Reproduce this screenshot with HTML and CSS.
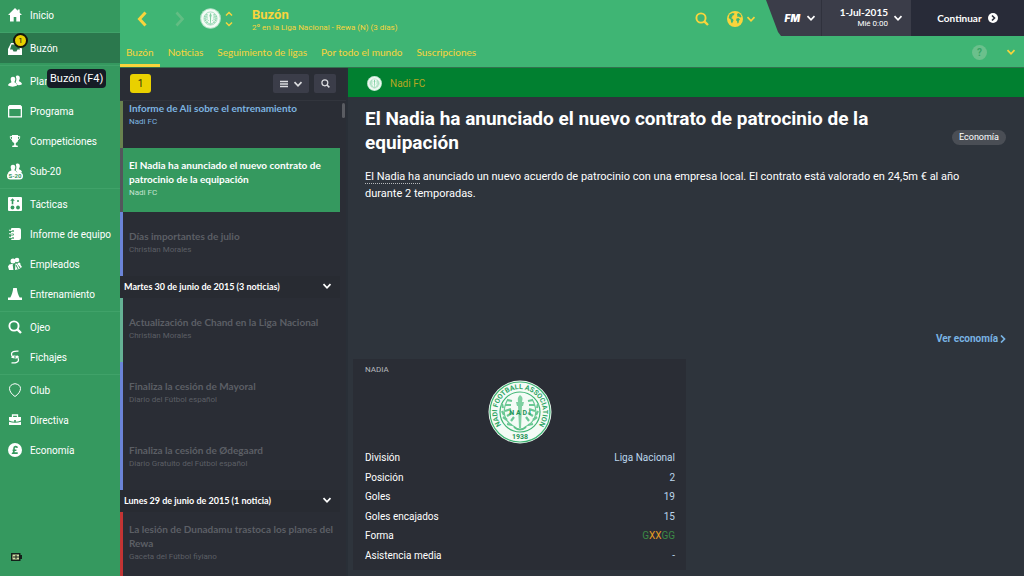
FILE: index.html
```
<!DOCTYPE html>
<html lang="es">
<head>
    <meta charset="UTF-8">
    <meta name="viewport" content="width=device-width, initial-scale=1">
    <title>Buzón</title>
    <link rel="stylesheet" href="styles.css">
</head>
<body>
    <!-- Símbolos reutilizados -->
    <svg class="symbols" aria-hidden="true">
        <symbol id="down" viewBox="0 0 10 10"><path d="M1.5 3.2L5 6.8L8.5 3.2" fill="none" stroke="currentColor" stroke-width="1.7"/></symbol>
        <symbol id="search" viewBox="0 0 14 14"><circle cx="6" cy="6" r="4.6" fill="none" stroke="currentColor" stroke-width="1.9"/><path d="M9.3 9.3L13 13" stroke="currentColor" stroke-width="2.4"/></symbol>
        <symbol id="people" viewBox="0 0 14 14"><path d="M9.500 1.500c1.700 0 2.500 1.200 2.300 2.900c-.1 1.200-.9 1.900-.9 2.600c.4.900 3.100 1 3.100 3.200c-1.500.9-3 1.100-4.600.9C8.900 9.600 7.900 8.800 7.500 8.300c.9-1.300 1.300-3.300.3-5.500c.3-.8.9-1.300 1.700-1.300z" fill="currentColor"/><path d="M5 2.800c1.700 0 2.500 1.200 2.300 2.800c-.1 1.200-.8 1.800-.8 2.600c.5.900 2.800 1 2.600 3.300c-2.500 1.500-6.500 1.500-9 0c-.1-2.300 2.800-2.400 3.300-3.300c0-.8-.6-1.400-.7-2.600C2.500 4 3.300 2.800 5 2.800z" fill="currentColor"/></symbol>
        <symbol id="crest" viewBox="0 0 64 64">
            <circle cx="32" cy="32" r="31.500" fill="#f4fbf6"/>
            <circle cx="32" cy="32" r="30" fill="none" stroke="#3fb574" stroke-width="1.200"/>
            <circle cx="32" cy="32" r="20" fill="none" stroke="#3fb574" stroke-width="1.200"/>
            <g fill="none" stroke="#6ac894" stroke-width="1.200">
                <path d="M27 47C16 42 13 31 20 19M37 47C48 42 51 31 44 19"/>
                <path stroke-width="2.200" d="M19 20l5 1M17 25l6 0M15 28l-1-4M17 31l6-2M16 35l-2-4M19 36l5-3M19 40l-4-3M23 41l3-4M24 45l-5-1M45 20l-5 1M47 25l-6 0M49 28l1-4M47 31l-6-2M48 35l2-4M45 36l-5-3M45 40l4-3M41 41l-3-4M40 45l5-1"/>
            </g>
            <path d="M32 15c4 3 2 5 2 7h2l-1 4h-1l-1 22h-2l-1-22h-1l-1-4h2c0-3-1-4 2-7z" fill="#7fd0a2"/>
            <path d="M26 47q6 5 12 0" fill="none" stroke="#5cc289" stroke-width="2"/>
        </symbol>
    </svg>

    <div class="app">
        <nav class="sidebar">
            <div class="group">
                <a href="#" class="nav-item"><svg viewBox="0 0 14 14"><path d="M7 0L0 7h2v6.500h3.700V9h2.600v4.500H12V7h2l-2.300-2.300V1.500H9.800v1.300z" fill="currentColor"/></svg>Inicio</a>
            </div>
            <div class="group">
                <a href="#" class="nav-item active"><svg viewBox="0 0 14 14"><path d="M3 2h8l3 6v6H0V8zM3.500 3.500L2 8.500h2.500l1 2h3l1-2H12l-1.500-5z" fill="currentColor" fill-rule="evenodd"/></svg>Buzón<span class="badge">1</span></a>
            </div>
            <div class="group">
                <a href="#" class="nav-item"><svg><use href="#people"/></svg>Plantilla<span class="tooltip">Buzón (F4)</span></a>
                <a href="#" class="nav-item"><svg viewBox="0 0 14 14"><path d="M1.500 1h11L14 2.500v11H0v-11zM1.300 5v7.200h11.400V5z" fill="currentColor" fill-rule="evenodd"/></svg>Programa</a>
                <a href="#" class="nav-item"><svg viewBox="0 0 14 14"><path d="M4 1h6v5c0 1.800-1 2.500-2.200 2.900v2.300l2 .6V13H4.200v-1.200l2-.6V8.900C5 8.500 4 7.800 4 6z" fill="currentColor"/><path d="M4.500 2.400H2.300c0 2 .7 3.400 2.500 3.800M9.500 2.400h2.200c0 2-.7 3.400-2.500 3.800" fill="none" stroke="currentColor" stroke-width="1"/></svg>Competiciones</a>
                <a href="#" class="nav-item"><svg class="youth" viewBox="0 0 18 18"><use href="#people" x="2" y="0" width="14" height="14"/><rect x="1" y="10.500" width="16" height="7" rx="3.500" fill="#fff"/><text x="9" y="16" text-anchor="middle">S-20</text></svg>Sub-20</a>
            </div>
            <div class="group">
                <a href="#" class="nav-item"><svg viewBox="0 0 14 14"><rect width="14" height="14" rx="1" fill="currentColor"/><g fill="#35995f"><circle cx="4.500" cy="10.500" r="1.900"/><circle cx="10" cy="10.500" r="1.900"/><circle cx="10" cy="4" r="1"/><path d="M4.500 1.200l2.300 2.600H5.300v3.500H3.700V3.800H2.200z"/></g></svg>Tácticas</a>
                <a href="#" class="nav-item"><svg viewBox="0 0 14 14"><path d="M4 1h7q2 0 2 2v8q0 2-2 2H4q-1 0-1-1V2q0-1 1-1z" fill="currentColor"/><path d="M1 4h4M1 7.500h4M1 11h4" stroke="#35995f" stroke-width="1.800" stroke-linecap="round"/><path d="M1 3.300q3-.5 3.500 1M1 6.800q3-.5 3.500 1M1 10.300q3-.5 3.500 1" fill="none" stroke="currentColor" stroke-width="1.100"/></svg>Informe de equipo</a>
                <a href="#" class="nav-item"><svg viewBox="0 0 14 14"><circle cx="5" cy="4" r="2.500" fill="currentColor"/><circle cx="9" cy="3" r="2.300" fill="currentColor"/><path d="M0 9.500Q1 6.500 5 7.200L6 13H1zM7 13l.5-6.500h4L14 10l-3 2z" fill="currentColor"/><path d="M5.200 8l.8 5M9 6l3 5M8 8l2 4" stroke="#35995f"/><circle cx="11" cy="7" r="1.500" fill="currentColor"/></svg>Empleados</a>
                <a href="#" class="nav-item"><svg viewBox="0 0 14 14"><path d="M5.200 1h3.600c.4 4 1.400 7 2.900 9.600H14V13H0v-2.400h2.300C3.800 8 4.800 5 5.200 1z" fill="currentColor"/></svg>Entrenamiento</a>
            </div>
            <div class="group">
                <a href="#" class="nav-item"><svg><use href="#search"/></svg>Ojeo</a>
                <a href="#" class="nav-item"><svg viewBox="0 0 14 14"><path d="M10.500 1.200C6 .8 3.500 2 3.500 4s.8 2.500 1.800 3.500M3.500 12.800c4.500.4 7-.8 7-2.800s-.5-3-1.600-4.200" fill="none" stroke="currentColor" stroke-width="1.300"/><path d="M3 7.800l3.600.6L6.400 4.800zM11 6.200L7.400 5.600l.2 3.600z" fill="currentColor"/></svg>Fichajes</a>
            </div>
            <div class="group">
                <a href="#" class="nav-item"><svg viewBox="0 0 14 14"><path d="M7 13.500C4 11.500 1.500 8.500 1.500 5.500c0-2.500 2-4.300 5.500-4.800c3.500.5 5.500 2.300 5.500 4.800c0 3-2.500 6-5.500 8z" fill="none" stroke="currentColor"/></svg>Club</a>
                <a href="#" class="nav-item"><svg viewBox="0 0 14 14"><path d="M4.500 4V2h5v2" fill="none" stroke="currentColor" stroke-width="1.300"/><path d="M1 4h12v3.500Q7 10 1 7.500zM1 8.700Q7 11 13 8.700V12H1z" fill="currentColor"/><rect x="6.200" y="7" width="1.600" height="2" fill="#35995f"/></svg>Directiva</a>
                <a href="#" class="nav-item"><svg viewBox="0 0 14 14"><circle cx="7" cy="7" r="7" fill="currentColor"/><path d="M9.400 4.800C8.800 3 6 3.300 6 5.200c0 1.600.6 3-.9 4.900h4.600M4.600 7.300h3.800" fill="none" stroke="#35995f" stroke-width="1.600"/></svg>Economía</a>
            </div>
            <svg class="battery" viewBox="0 0 11 8"><path d="M0 0h9.500v2H11v4H9.500v2H0z" fill="#14201a"/><rect x="1.500" y="1.500" width="6.500" height="5" fill="#d5dfa6"/><path d="M2 4h3M5 2v4M5 4h3" stroke="#14201a"/></svg>
        </nav>

        <div class="main">
            <header class="topbar">
                <div class="topbar-row">
                    <div class="history">
                        <button aria-label="Atrás"><svg viewBox="0 0 10 16"><path d="M8.500 1.500L2.500 8l6 6.500" fill="none" stroke="currentColor" stroke-width="3"/></svg></button>
                        <button aria-label="Adelante" disabled><svg viewBox="0 0 10 16"><path d="M1.500 1.500l6 6.500-6 6.500" fill="none" stroke="currentColor" stroke-width="2.600"/></svg></button>
                    </div>
                    <svg class="crest-top"><use href="#crest"/></svg>
                    <button class="switcher" aria-label="Cambiar"><svg viewBox="0 0 8 16"><path d="M1 4.500L4 1.500l3 3M1 11.500l3 3 3-3" fill="none" stroke="currentColor" stroke-width="1.500"/></svg></button>
                    <div class="page-title">
                        <h1>Buzón</h1>
                        <p>2º en la Liga Nacional - Rewa (N) (3 días)</p>
                    </div>
                    <button class="top-search" aria-label="Buscar"><svg><use href="#search"/></svg></button>
                    <button class="world" aria-label="Mundo"><svg class="globe" viewBox="0 0 16 16"><circle cx="8" cy="8" r="8" fill="currentColor"/><path d="M2.500 3.500l3-1.500 2 .5-.5 1.500-2 1 .5 1-1.500 1 2 1 .5 1.500-1.500 3-1-1.500-.3-2.500-2-1.500zM10 3l1.500-1 2 1.500 1 2.500-1.500.5-1-1-1.500.5zM9.500 7.500l2-.5 1.500 1.500-1 1-.5 2.500-1 .5-.5-2.500-1-.5z" fill="#3fb574"/></svg><svg class="chev"><use href="#down"/></svg></button>
                    <div class="game-controls">
                        <button class="fm"><b>FM</b><svg class="chev"><use href="#down"/></svg></button>
                        <button class="date"><span><b>1-Jul-2015</b><small>Mié 0:00</small></span><svg class="chev"><use href="#down"/></svg></button>
                        <button class="continue">Continuar<svg viewBox="0 0 10 10"><circle cx="5" cy="5" r="5" fill="#fff"/><path d="M4 2.500L6.500 5 4 7.500" fill="none" stroke="#282b38" stroke-width="1.600"/></svg></button>
                    </div>
                </div>
                <div class="tabs">
                    <a href="#" class="tab current">Buzón</a>
                    <a href="#" class="tab">Noticias</a>
                    <a href="#" class="tab">Seguimiento de ligas</a>
                    <a href="#" class="tab">Por todo el mundo</a>
                    <a href="#" class="tab">Suscripciones</a>
                    <button class="help">?</button>
                    <button class="more" aria-label="Más"><svg class="chev"><use href="#down"/></svg></button>
                </div>
            </header>

            <div class="content">
                <section class="inbox">
                    <div class="inbox-tools">
                        <span class="unread">1</span>
                        <button class="tool filter" aria-label="Filtrar"><svg viewBox="0 0 8 8"><path d="M0 1.500h8M0 4h8M0 6.500h8" stroke="currentColor" stroke-width="1.400"/></svg><svg class="chev"><use href="#down"/></svg></button>
                        <button class="tool" aria-label="Buscar noticias"><svg class="glass"><use href="#search"/></svg></button>
                    </div>
                    <div class="inbox-body">
                        <div class="mails">
                            <article class="mail club unseen cut"><h3>Informe de Ali sobre el entrenamiento</h3><p>Nadi FC</p></article>
                            <article class="mail selected"><h3>El Nadia ha anunciado el nuevo contrato de patrocinio de la equipación</h3><p>Nadi FC</p></article>
                            <article class="mail news"><h3>Días importantes de julio</h3><p>Christian Morales</p></article>
                            <button class="day">Martes 30 de junio de 2015 (3 noticias)<svg class="chev"><use href="#down"/></svg></button>
                            <article class="mail league"><h3>Actualización de Chand en la Liga Nacional</h3><p>Christian Morales</p></article>
                            <article class="mail news"><h3>Finaliza la cesión de Mayoral</h3><p>Diario del Fútbol español</p></article>
                            <article class="mail news"><h3>Finaliza la cesión de Ødegaard</h3><p>Diario Gratuito del Fútbol español</p></article>
                            <button class="day">Lunes 29 de junio de 2015 (1 noticia)<svg class="chev"><use href="#down"/></svg></button>
                            <article class="mail injury"><h3>La lesión de Dunadamu trastoca los planes del Rewa</h3><p>Gaceta del Fútbol fiyiano</p></article>
                        </div>
                        <div class="scroll"><div class="thumb"></div></div>
                    </div>
                </section>

                <section class="reader">
                    <div class="sender"><svg><use href="#crest"/></svg><a href="#">Nadi FC</a></div>
                    <div class="story">
                        <div class="headline">
                            <h2>El Nadia ha anunciado el nuevo contrato de patrocinio de la equipación</h2>
                            <span class="tag">Economía</span>
                        </div>
                        <p class="text"><a href="#">El Nadia ha</a> anunciado un nuevo acuerdo de patrocinio con una empresa local. El contrato está valorado en 24,5m € al año durante 2 temporadas.</p>
                    </div>
                    <a href="#" class="see-more">Ver economía<svg viewBox="0 0 6 8"><path d="M1 .5L4.500 4 1 7.500" fill="none" stroke="currentColor" stroke-width="1.700"/></svg></a>
                    <div class="club-card">
                        <h4>NADIA</h4>
                        <svg class="crest-big" viewBox="0 0 64 64">
                            <use href="#crest"/>
                            <path id="ring" d="M18.500 50.500A22.900 22.900 0 1 1 45.500 50.500" fill="none"/>
                            <text class="ring-text"><textPath href="#ring" startOffset="50%" text-anchor="middle">NADI FOOTBALL ASSOCIATION</textPath></text>
                            <text class="crest-text" x="32" y="35" text-anchor="middle">N A D I</text>
                            <text class="crest-text" x="32" y="59" text-anchor="middle">1938</text>
                        </svg>
                        <table>
                            <tr><th scope="row">División</th><td>Liga Nacional</td></tr>
                            <tr><th scope="row">Posición</th><td>2</td></tr>
                            <tr><th scope="row">Goles</th><td>19</td></tr>
                            <tr><th scope="row">Goles encajados</th><td>15</td></tr>
                            <tr><th scope="row">Forma</th><td><span class="win">G</span><span class="draw">XX</span><span class="win">GG</span></td></tr>
                            <tr><th scope="row">Asistencia media</th><td>-</td></tr>
                        </table>
                    </div>
                </section>
            </div>
        </div>
    </div>
</body>
</html>
```
FILE: styles.css
```
* {
    box-sizing: border-box;
}
body {
    margin: 0;
    font-family: Roboto, "Open Sans", sans-serif;
    font-size: 10px;
    color: #fff;
    background: #2e343c;
}
h1, h2, h3, h4, p {
    margin: 0;
}
a {
    color: inherit;
    text-decoration: none;
}
button {
    font: inherit;
    color: inherit;
    background: none;
    border: 0;
    padding: 0;
    cursor: pointer;
}
svg {
    display: block;
    flex: none;
}
.symbols {
    position: absolute;
    width: 0;
    height: 0;
}
.chev {
    width: 10px;
    height: 10px;
}
.app {
    display: flex;
    min-height: 100vh;
}

/* Menú lateral */
.sidebar {
    width: 120px;
    flex: none;
    display: flex;
    flex-direction: column;
    background: #35995f;
}
.group {
    padding-bottom: 2px;
    border-bottom: 1px solid #40a269;
}
.group:last-of-type {
    border-bottom: 0;
}
.nav-item {
    position: relative;
    display: flex;
    align-items: center;
    gap: 8px;
    height: 30px;
    padding-left: 8px;
    white-space: nowrap;
}
.nav-item svg {
    width: 14px;
    height: 14px;
}
.nav-item .youth {
    width: 18px;
    height: 18px;
    margin: 0 -2px;
}
.youth text {
    font-size: 6px;
    font-weight: bold;
    fill: #35995f;
}
.nav-item.active {
    background: #2b784d;
}
.badge {
    position: absolute;
    left: 13px;
    top: 0;
    width: 15px;
    height: 15px;
    border: 2px solid #15170c;
    border-radius: 50%;
    background: #e9d000;
    color: #111;
    font-size: 8px;
    line-height: 11px;
    text-align: center;
}
.tooltip {
    position: absolute;
    left: 47px;
    top: 3px;
    z-index: 1;
    padding: 0 3px;
    border-radius: 4px;
    background: #151c26;
    font-size: 11px;
    line-height: 19px;
}
.battery {
    width: 11px;
    height: 8px;
    margin: auto 0 15px 11px;
}

/* Cabecera */
.main {
    flex: 1;
    min-width: 0;
    display: flex;
    flex-direction: column;
}
.topbar {
    background: #3fb574;
    color: #f9d43c;
    border-bottom: 1px solid #34704f;
}
.topbar-row {
    display: flex;
    align-items: center;
    height: 37px;
}
.history {
    display: flex;
    gap: 28px;
    padding: 0 15px 0 17px;
}
.history svg {
    width: 10px;
    height: 16px;
}
.history button:disabled {
    color: #62bd83;
}
.crest-top {
    width: 21px;
    height: 21px;
}
.switcher {
    margin: 0 19px 0 4px;
}
.switcher svg {
    width: 8px;
    height: 16px;
}
.page-title {
    flex: 1;
    padding-top: 2px;
}
.page-title h1 {
    font-size: 13px;
    line-height: 15px;
}
.page-title p {
    font-size: 8px;
    line-height: 11px;
}
.top-search svg {
    width: 14px;
    height: 14px;
}
.world {
    display: flex;
    align-items: center;
    gap: 3px;
    margin: 0 10px 0 18px;
}
.globe {
    width: 16px;
    height: 16px;
}
.game-controls {
    display: flex;
    align-self: flex-start;
    height: 36px;
    background: #3b3d49;
    color: #fff;
    clip-path: polygon(0 0, 100% 0, 100% 100%, 15px 100%, 12px 32px);
}
.fm {
    display: flex;
    align-items: center;
    justify-content: flex-end;
    gap: 6px;
    width: 55px;
    padding-right: 5px;
    font-size: 10px;
    font-style: italic;
}
.fm b {
    font-family: Inter, sans-serif;
    font-weight: 900;
}
.date {
    display: flex;
    align-items: center;
    justify-content: flex-end;
    gap: 5px;
    width: 90px;
    padding-right: 8px;
    border-left: 1px solid #30323d;
    text-align: right;
}
.date b, .date small {
    display: block;
    line-height: 12px;
}
.date b {
    font-family: Lato, sans-serif;
}
.date small {
    font-size: 8px;
}
.continue {
    display: flex;
    align-items: center;
    justify-content: center;
    gap: 6px;
    width: 113px;
    background: #282b38;
    font-family: Lato, sans-serif;
    font-weight: bold;
}
.continue svg {
    width: 10px;
    height: 10px;
}
.tabs {
    display: flex;
    height: 30px;
    gap: 2px;
    padding-right: 8px;
    font-family: Lato, sans-serif;
}
.tab {
    padding: 0 6px;
    line-height: 30px;
}
.tab.current {
    border-bottom: 3px solid #f9d43c;
}
.help {
    align-self: center;
    width: 15px;
    height: 15px;
    margin: 0 17px 0 auto;
    border-radius: 50%;
    background: #6bc08c;
    color: #36a566;
    font-family: Roboto, sans-serif;
    font-weight: bold;
}

/* Lista de noticias */
.content {
    flex: 1;
    display: flex;
}
.inbox {
    width: 228px;
    flex: none;
    background: #2a2d35;
    border-right: 2px solid #292f37;
}
.inbox-tools {
    display: flex;
    align-items: center;
    gap: 5px;
    height: 33px;
    padding: 0 10px 1px;
    border-bottom: 1px solid #32353d;
}
.unread {
    width: 21px;
    margin-right: auto;
    border-radius: 3px;
    background: #e9d000;
    color: #332f08;
    line-height: 19px;
    text-align: center;
}
.tool {
    display: flex;
    align-items: center;
    justify-content: center;
    gap: 5px;
    width: 22px;
    height: 19px;
    border-radius: 2px;
    background: #3b3d49;
    color: #dcdde0;
}
.tool.filter {
    width: 36px;
}
.filter svg:first-child {
    width: 8px;
    height: 8px;
}
.glass {
    width: 9px;
    height: 9px;
}
.inbox-body {
    display: flex;
}
.mails {
    flex: 1;
}
.mail {
    display: flex;
    flex-direction: column;
    justify-content: center;
    min-height: 64px;
    padding: 0 6px 2px;
    border-left: 3px solid #53565c;
    color: #5c5f65;
}
.mail h3 {
    font-family: Lato, sans-serif;
    font-size: 10px;
    line-height: 14px;
}
.mail p {
    font-size: 8px;
    line-height: 14px;
}
.mail.cut {
    justify-content: flex-start;
    min-height: 47px;
}
.mail.club {
    border-color: #68824f;
}
.mail.news {
    border-color: #6b84d8;
}
.mail.league {
    border-color: #65b295;
}
.mail.injury {
    border-color: #c23434;
}
.mail.unseen {
    color: #7db4e0;
}
.mail.selected {
    background: #35995f;
    background-clip: padding-box;
    color: #fff;
}
.selected p {
    color: #c5e3d1;
}
.day {
    display: flex;
    align-items: center;
    justify-content: space-between;
    width: 100%;
    height: 22px;
    padding: 0 8px 2px 4px;
    background: #282b32;
    font-family: Lato, sans-serif;
    font-size: 9px;
    font-weight: bold;
}
.scroll {
    width: 6px;
    padding: 2px 1px 0 2px;
}
.thumb {
    height: 15px;
    border-radius: 2px;
    background: #5a5c62;
}

/* Noticia abierta */
.reader {
    flex: 1;
    display: flex;
    flex-direction: column;
    padding-bottom: 6px;
}
.sender {
    display: flex;
    align-items: center;
    gap: 8px;
    height: 29px;
    padding: 2px 19px 0;
    background: #018030;
    color: #b7a722;
}
.sender svg {
    width: 15px;
    height: 15px;
}
.story {
    padding: 10px 18px 0 17px;
}
.headline {
    display: flex;
    align-items: center;
    gap: 10px;
}
.headline h2 {
    flex: 1;
    font-size: 19px;
    line-height: 24px;
}
.tag {
    margin-top: 13px;
    padding: 0 7px;
    border-radius: 8px;
    background: #4a4e55;
    font-size: 9px;
    line-height: 15px;
}
.text {
    margin-top: 13px;
    padding-right: 18px;
    font-size: 11px;
    line-height: 17px;
}
.text a {
    border-bottom: 1px dotted #b5b8bb;
}
.see-more {
    display: flex;
    align-items: center;
    gap: 2px;
    margin: auto 18px 12px auto;
    color: #79b3e3;
    font-weight: bold;
    line-height: 16px;
}
.see-more svg {
    width: 6px;
    height: 8px;
}
.club-card {
    width: 50%;
    max-width: 333px;
    height: 211px;
    margin-left: 5px;
    padding: 5px 11px 5px 12px;
    background: #2a2d35;
}
.club-card h4 {
    color: #b6b9bd;
    font-size: 8px;
    font-weight: normal;
    line-height: 12px;
}
.crest-big {
    width: 64px;
    height: 64px;
    margin: 4px auto 4px;
}
.ring-text {
    font-size: 7px;
    font-weight: bold;
    fill: #2fa565;
}
.crest-text {
    font-size: 7px;
    font-weight: bold;
    fill: #239457;
}
table {
    width: 100%;
    height: 117px;
    border-collapse: collapse;
}
th, td {
    padding: 0;
    font-weight: normal;
    text-align: left;
}
td {
    color: #bcd6ec;
    text-align: right;
}
.win {
    color: #3c8a45;
}
.draw {
    color: #e39b24;
}
```
